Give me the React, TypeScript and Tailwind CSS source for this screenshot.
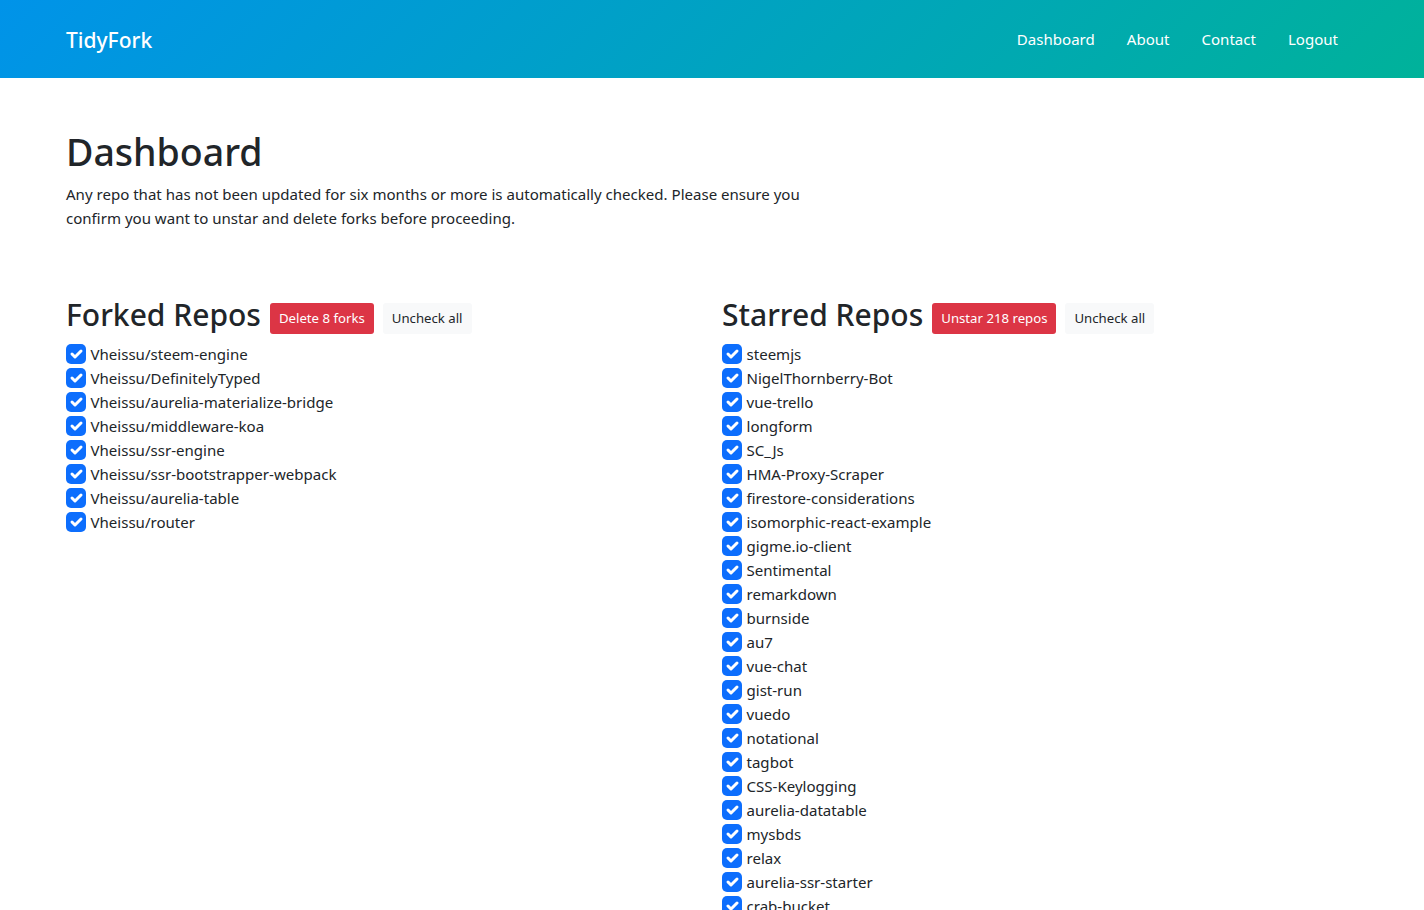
const forks = [
  "Vheissu/steem-engine",
  "Vheissu/DefinitelyTyped",
  "Vheissu/aurelia-materialize-bridge",
  "Vheissu/middleware-koa",
  "Vheissu/ssr-engine",
  "Vheissu/ssr-bootstrapper-webpack",
  "Vheissu/aurelia-table",
  "Vheissu/router",
];

const starred = [
  "steemjs",
  "NigelThornberry-Bot",
  "vue-trello",
  "longform",
  "SC_Js",
  "HMA-Proxy-Scraper",
  "firestore-considerations",
  "isomorphic-react-example",
  "gigme.io-client",
  "Sentimental",
  "remarkdown",
  "burnside",
  "au7",
  "vue-chat",
  "gist-run",
  "vuedo",
  "notational",
  "tagbot",
  "CSS-Keylogging",
  "aurelia-datatable",
  "mysbds",
  "relax",
  "aurelia-ssr-starter",
  "crab-bucket",
];

const navLinks = ["Dashboard", "About", "Contact", "Logout"];

const RepoRow = ({ name }: { name: string }) => (
  <label className="flex h-6 items-center">
    <span className="mr-[4.5px] flex h-5 w-5 shrink-0 items-center justify-center rounded-[5px] bg-[#0d6efd]">
      <svg viewBox="0 0 20 20" className="h-5 w-5" fill="none">
        <path d="M6 10l3 3l6-6" stroke="#fff" strokeWidth="3" strokeLinecap="round" strokeLinejoin="round" />
      </svg>
    </span>
    <span className="whitespace-nowrap">{name}</span>
  </label>
);

const RepoColumn = ({
  title,
  action,
  repos,
}: {
  title: string;
  action: string;
  repos: string[];
}) => (
  <div>
    <div className="mb-[6px] flex h-[42px] items-center">
      <h2 className="mr-[9px] text-[30px] leading-[42px] font-medium whitespace-nowrap">{title}</h2>
      <button className="mt-[7px] mr-[9px] h-[31px] rounded-[3px] bg-[#dc3545] px-[9px] pt-px text-[13.2px] text-white">
        {action}
      </button>
      <button className="mt-[7px] h-[31px] rounded-[3px] bg-[#f8f9fa] px-[9px] pt-px text-[13.2px] text-[#212529]">
        Uncheck all
      </button>
    </div>
    {repos.map((repo) => (
      <RepoRow key={repo} name={repo} />
    ))}
  </div>
);

export default function App() {
  return (
    <div className="h-[910px] overflow-hidden bg-white font-['Noto_Sans',sans-serif] text-[15.05px] text-[#212529]">
      {/* Navbar */}
      <nav className="flex h-[78px] items-center justify-between bg-[linear-gradient(135deg,#0093e9,#00b29a)] pr-[70px] pl-[66px] text-white">
        <a className="pt-1 text-[21px] font-medium">TidyFork</a>
        <div className="flex">
          {navLinks.map((link) => (
            <a key={link} className="px-4 whitespace-nowrap">
              {link}
            </a>
          ))}
        </div>
      </nav>

      <main className="px-[66px] pt-[48px]">
        <h1 className="mb-[4px] text-[37.5px] leading-[52px] font-medium">Dashboard</h1>
        <p className="w-[760px] leading-6">
          Any repo that has not been updated for six months or more is automatically checked. Please ensure you confirm
          you want to unstar and delete forks before proceeding.
        </p>

        <div className="mt-[64px] grid grid-cols-[656px_1fr]">
          <RepoColumn title="Forked Repos" action="Delete 8 forks" repos={forks} />
          <RepoColumn title="Starred Repos" action="Unstar 218 repos" repos={starred} />
        </div>
      </main>
    </div>
  );
}
